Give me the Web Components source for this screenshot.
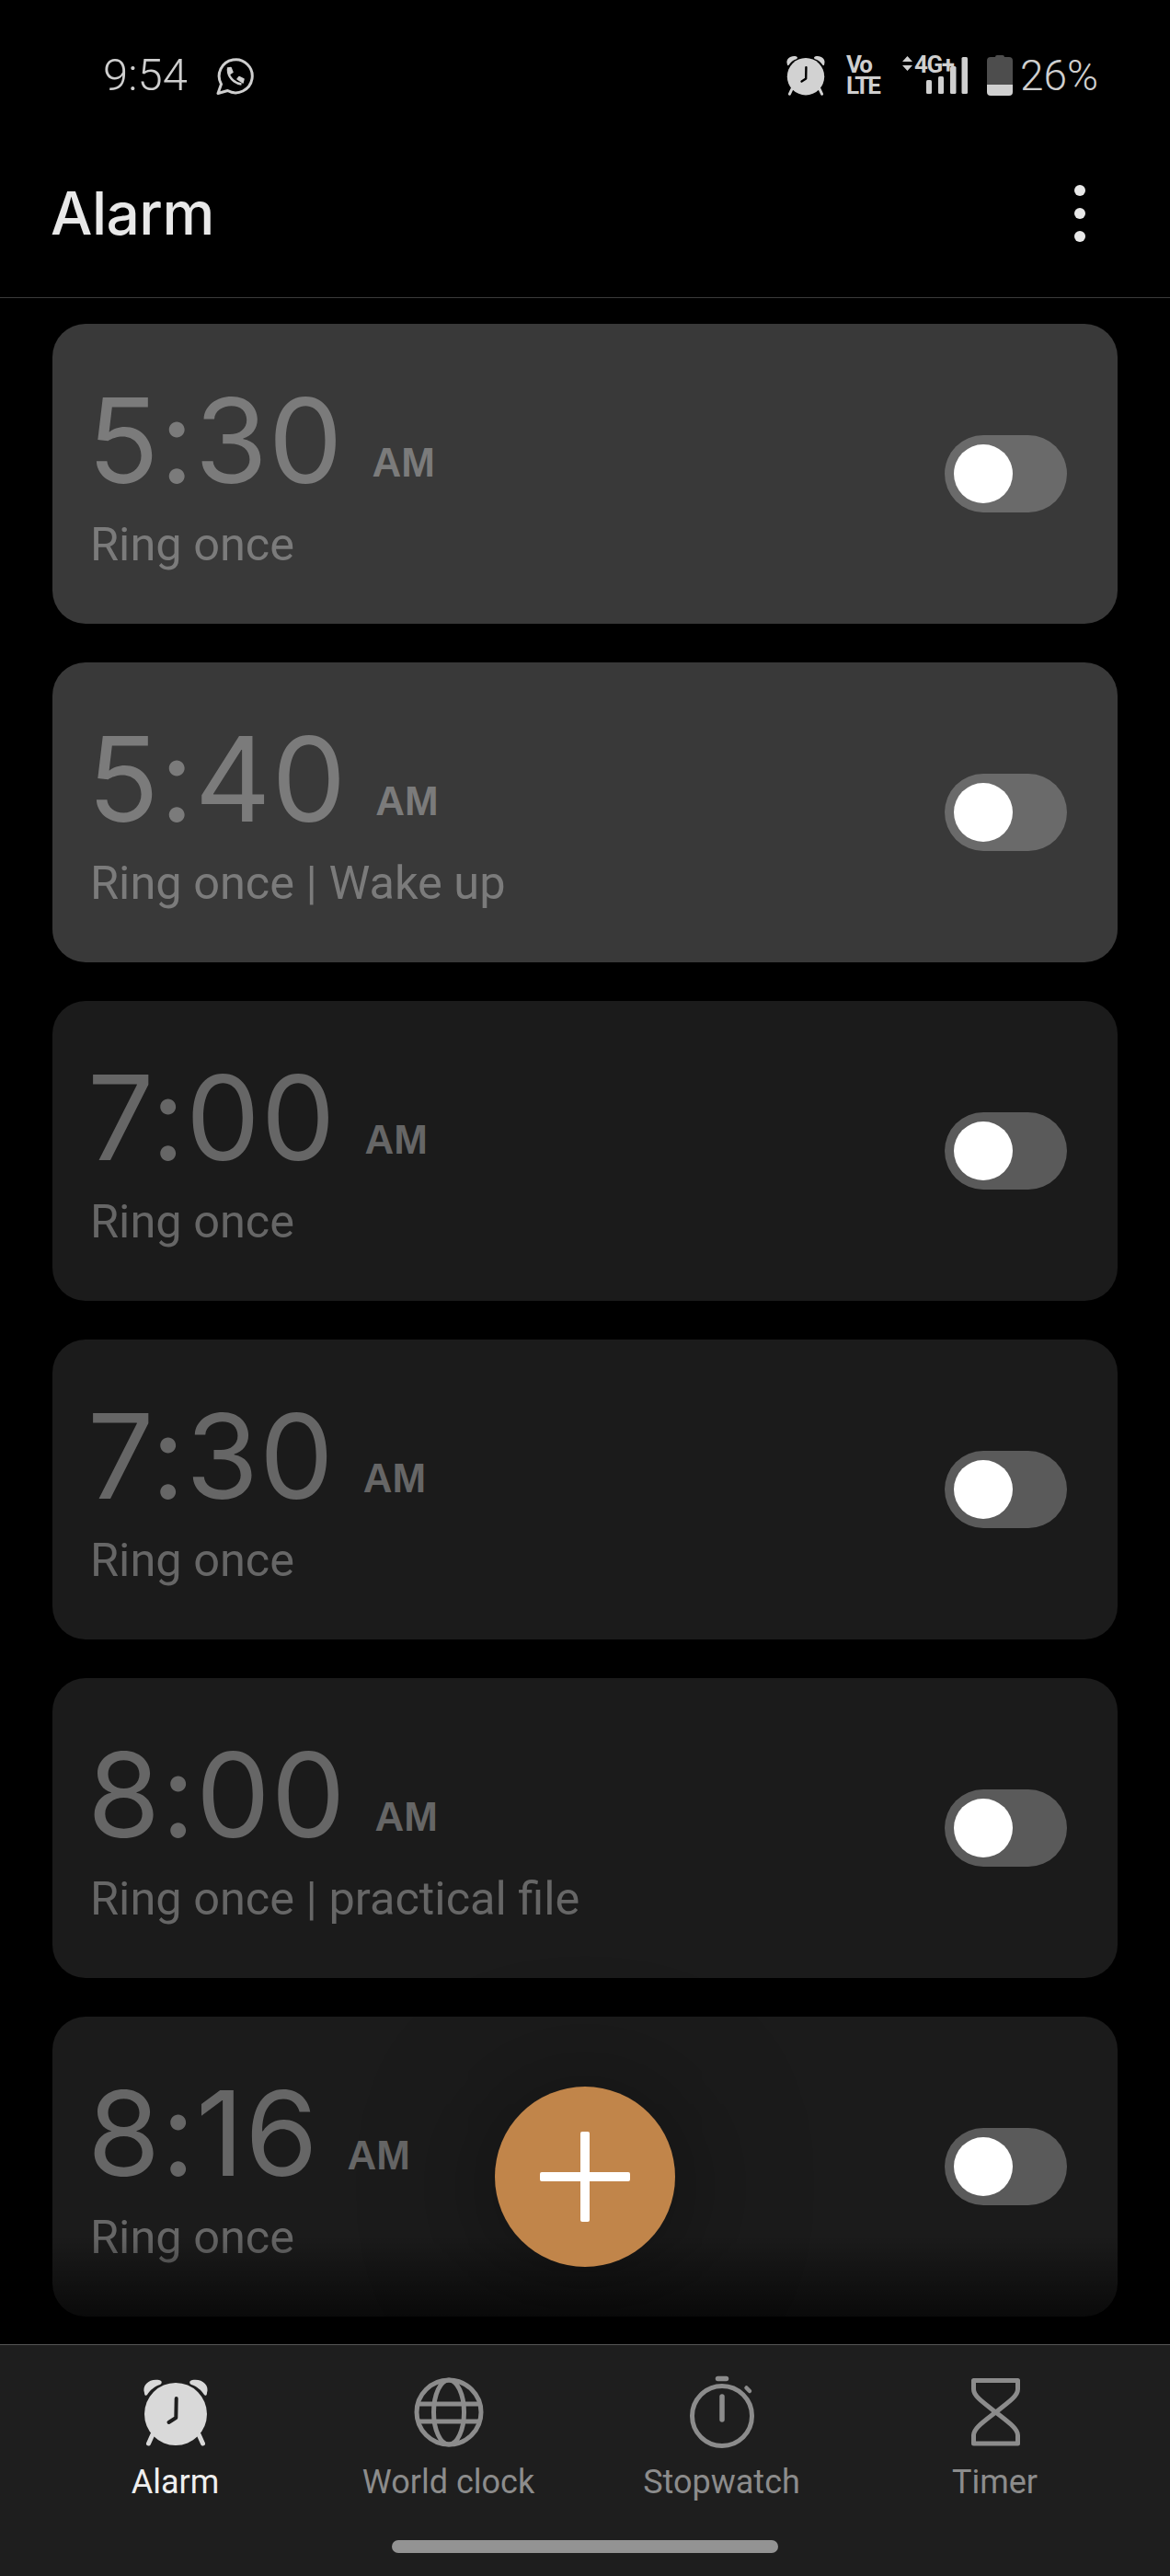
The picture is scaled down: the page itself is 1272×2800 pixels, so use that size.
<!DOCTYPE html>
<html lang="en">
<head>
<meta charset="utf-8">
<title>Alarm</title>
<style>
    html, body { margin: 0; background: #000; }
</style>
</head>
<body>
<alarm-app>
    <status-bar></status-bar>
    <app-header>Alarm</app-header>
    <alarm-list>
        <alarm-card bright><span slot="time">5:30</span><span slot="period">AM</span>Ring once</alarm-card>
        <alarm-card bright><span slot="time">5:40</span><span slot="period">AM</span>Ring once | Wake up</alarm-card>
        <alarm-card><span slot="time">7:00</span><span slot="period">AM</span>Ring once</alarm-card>
        <alarm-card><span slot="time">7:30</span><span slot="period">AM</span>Ring once</alarm-card>
        <alarm-card><span slot="time">8:00</span><span slot="period">AM</span>Ring once | practical file</alarm-card>
        <alarm-card><span slot="time">8:16</span><span slot="period">AM</span>Ring once</alarm-card>
    </alarm-list>
    <fab-button></fab-button>
    <tab-bar>
        <tab-item icon="alarm" active>Alarm</tab-item>
        <tab-item icon="globe">World clock</tab-item>
        <tab-item icon="stopwatch">Stopwatch</tab-item>
        <tab-item icon="timer">Timer</tab-item>
    </tab-bar>
</alarm-app>

<script>
const alarmGlyph = ( handColor ) => `
    <circle cx="42" cy="44" r="34" fill="currentColor"/>
    <path d="M8 21C5 12 14 5 24 7C28 8 27 11 25 12C19 14 14 18 11 23C10 24.500 8 24 8 21Z" fill="currentColor"/>
    <path d="M76 21C79 12 70 5 60 7C56 8 57 11 59 12C65 14 70 18 73 23C74 24.500 76 24 76 21Z" fill="currentColor"/>
    <path d="M17 66L12.500 76M67 66L71.500 76" stroke="currentColor" stroke-width="5" stroke-linecap="round" fill="none"/>
    <path d="M42.700 27L42.300 48L34.500 53" stroke="${handColor}" stroke-width="4" stroke-linecap="round" stroke-linejoin="round" fill="none"/>
`;

const tabIcons = {
    alarm: alarmGlyph("#1e1e1e"),
    globe: `
        <g fill="none" stroke="currentColor" stroke-width="5">
            <circle cx="42" cy="42" r="35"/>
            <ellipse cx="42" cy="42" rx="16.500" ry="35"/>
            <path d="M10 33H74M10 52H74"/>
        </g>`,
    stopwatch: `
        <g fill="none" stroke="currentColor" stroke-linecap="round">
            <circle cx="42" cy="46" r="32.500" stroke-width="5"/>
            <path d="M37.500 5.500H46.500" stroke-width="5.500"/>
            <path d="M68.500 15.500L72 19" stroke-width="4.500"/>
            <path d="M42 25V50" stroke-width="5.500"/>
        </g>`,
    timer: `
        <path d="M18.500 7.500H66.500V17C66.500 24 58 30 42.500 42C27 54 18.500 60 18.500 67V76H66.500V67C66.500 60 58 54 42.500 42C27 30 18.500 24 18.500 17Z"
              fill="none" stroke="currentColor" stroke-width="5" stroke-linejoin="round"/>`
};

class AlarmApp extends HTMLElement {
    constructor() {
        super();
        const shadowRoot = this.attachShadow({ mode: 'open' });
        shadowRoot.innerHTML = `
            <style>
                :host {
                    display: flex;
                    flex-direction: column;
                    position: relative;
                    width: 1272px;
                    height: 2800px;
                    overflow: hidden;
                    background: #000;
                    font-family: Inter, "Liberation Sans", sans-serif;
                }
            </style>
            <slot></slot>
        `;
    }
}

class StatusBar extends HTMLElement {
    constructor() {
        super();
        const shadowRoot = this.attachShadow({ mode: 'open' });
        shadowRoot.innerHTML = `
            <style>
                :host {
                    display: flex;
                    align-items: center;
                    height: 164px;
                    flex: none;
                    box-sizing: border-box;
                    padding: 0 78px 0 112px;
                    color: #cfcfcf;
                    font-family: Roboto, sans-serif;
                }
                .clock {
                    font-size: 49px;
                    font-weight: 300;
                    line-height: 60px;
                }
                .whatsapp {
                    margin-left: 30px;
                    margin-top: 1px;
                }
                .right {
                    display: flex;
                    align-items: center;
                    margin-left: auto;
                }
                .volte {
                    display: flex;
                    flex-direction: column;
                    width: 38px;
                    margin-left: 22px;
                    font-size: 26px;
                    font-weight: 700;
                    line-height: 23px;
                    letter-spacing: -2px;
                }
                .network {
                    display: grid;
                    width: 72px;
                    height: 44px;
                    margin-left: 22px;
                }
                .network > * {
                    grid-area: 1 / 1;
                }
                .network span {
                    margin-left: 14px;
                    font-size: 26px;
                    font-weight: 700;
                    line-height: 20px;
                    letter-spacing: -1.4px;
                    white-space: nowrap;
                }
                .battery {
                    margin-left: 21px;
                }
                .percent {
                    margin-left: 8px;
                    font-size: 46px;
                    font-weight: 300;
                    line-height: 60px;
                }
            </style>
            <span class="clock">9:54</span>
            <svg class="whatsapp" width="42" height="42" viewBox="0 0 42 42">
                <path d="M3 39.500L6.500 29.500A18 18 0 1 1 13.500 36.500Z" fill="none" stroke="currentColor" stroke-width="3" stroke-linejoin="round"/>
                <path d="M14 13C13.500 21 20 28.500 28.500 29.500" fill="none" stroke="currentColor" stroke-width="2.500"/>
                <path d="M13.500 12L17 11.500L19 16.500L16 18.500Z M24 24L26 21.500L31 24L30 28Z" fill="currentColor" stroke="currentColor" stroke-width="1.500" stroke-linejoin="round"/>
            </svg>
            <div class="right">
                <svg width="44" height="44" viewBox="6 5 72 74" style="color:#d2d2d2">${alarmGlyph("#000")}</svg>
                <div class="volte"><span>Vo</span><span>LTE</span></div>
                <div class="network">
                    <svg width="72" height="44" viewBox="0 0 72 44">
                        <path d="M6.500 1L12 7H1ZM6.500 17L12 11H1Z" fill="currentColor"/>
                        <rect x="27" y="27" width="6" height="15" rx="1.500" fill="currentColor"/>
                        <rect x="40" y="23" width="6" height="19" rx="1.500" fill="currentColor"/>
                        <rect x="53" y="12" width="6.500" height="30" rx="1.500" fill="currentColor"/>
                        <rect x="65.500" y="2" width="6.500" height="40" rx="1.500" fill="currentColor"/>
                    </svg>
                    <span>4G+</span>
                </div>
                <svg class="battery" width="28" height="44" viewBox="0 0 28 44">
                    <path d="M9 2Q9 0 11 0H17Q19 0 19 2H24Q28 2 28 6V32H0V6Q0 2 4 2Z" fill="#4d4d4d"/>
                    <path d="M0 32H28V40Q28 44 24 44H4Q0 44 0 40Z" fill="#cfcfcf"/>
                </svg>
                <span class="percent">26%</span>
            </div>
        `;
    }
}

class AppHeader extends HTMLElement {
    constructor() {
        super();
        const shadowRoot = this.attachShadow({ mode: 'open' });
        shadowRoot.innerHTML = `
            <style>
                :host {
                    display: flex;
                    align-items: center;
                    justify-content: space-between;
                    flex: none;
                    height: 160px;
                    box-sizing: border-box;
                    padding: 0 92px 24px 55px;
                    border-bottom: 1px solid #3a3a3a;
                    color: #e8e8e8;
                    font-size: 64px;
                    font-weight: 500;
                    letter-spacing: -0.5px;
                }
                .more {
                    display: flex;
                    flex-direction: column;
                    gap: 13px;
                }
                .more i {
                    width: 12px;
                    height: 12px;
                    border-radius: 50%;
                    background: #e8e8e8;
                }
            </style>
            <slot></slot>
            <div class="more"><i></i><i></i><i></i></div>
        `;
    }
}

class AlarmList extends HTMLElement {
    constructor() {
        super();
        const shadowRoot = this.attachShadow({ mode: 'open' });
        shadowRoot.innerHTML = `
            <style>
                :host {
                    display: flex;
                    flex-direction: column;
                    flex: 1;
                    min-height: 0;
                    position: relative;
                    gap: 42px;
                    padding: 28px 57px 0;
                }
                :host::after {
                    content: "";
                    position: absolute;
                    left: 0;
                    right: 0;
                    bottom: 0;
                    height: 118px;
                    background: linear-gradient(rgba(0, 0, 0, 0), rgba(0, 0, 0, .85));
                }
            </style>
            <slot></slot>
        `;
    }
}

class AlarmCard extends HTMLElement {
    constructor() {
        super();
        const shadowRoot = this.attachShadow({ mode: 'open' });
        shadowRoot.innerHTML = `
            <style>
                :host {
                    display: flex;
                    align-items: center;
                    justify-content: space-between;
                    flex: none;
                    height: 326px;
                    box-sizing: border-box;
                    padding: 0 55px 0 41px;
                    border-radius: 36px;
                    background: var(--card-bg, #1b1b1b);
                    color: var(--card-fg, #666);
                }
                :host([bright]) {
                    --card-bg: #393939;
                    --card-fg: #7b7b7b;
                    --track-bg: #6a6a6a;
                }
                .text {
                    align-self: flex-start;
                    padding-top: 62px;
                }
                .when {
                    height: 130px;
                    margin-left: -3px;
                    line-height: 130px;
                    white-space: nowrap;
                }
                ::slotted([slot="time"]) {
                    font-size: 128px;
                    font-weight: 400;
                    letter-spacing: 1px;
                }
                ::slotted([slot="period"]) {
                    margin-left: 31px;
                    font-family: "Liberation Sans", sans-serif;
                    font-size: 44px;
                    font-weight: 700;
                    vertical-align: 7px;
                }
                .label {
                    margin-top: 18px;
                    font-family: Roboto, sans-serif;
                    font-size: 50.5px;
                    font-weight: 400;
                    line-height: 60px;
                }
            </style>
            <div class="text">
                <div class="when"><slot name="time"></slot><slot name="period"></slot></div>
                <div class="label"><slot></slot></div>
            </div>
            <alarm-switch></alarm-switch>
        `;
    }
}

class AlarmSwitch extends HTMLElement {
    constructor() {
        super();
        const shadowRoot = this.attachShadow({ mode: 'open' });
        shadowRoot.innerHTML = `
            <style>
                :host {
                    display: flex;
                    align-items: center;
                    flex: none;
                    width: 133px;
                    height: 84px;
                    box-sizing: border-box;
                    padding: 0 10px;
                    border-radius: 42px;
                    background: var(--track-bg, #5a5a5a);
                }
                i {
                    width: 64px;
                    height: 64px;
                    border-radius: 50%;
                    background: #fff;
                }
            </style>
            <i></i>
        `;
    }
}

class FabButton extends HTMLElement {
    constructor() {
        super();
        const shadowRoot = this.attachShadow({ mode: 'open' });
        shadowRoot.innerHTML = `
            <style>
                :host {
                    display: flex;
                    align-items: center;
                    justify-content: center;
                    position: absolute;
                    left: 538px;
                    bottom: 336px;
                    width: 196px;
                    height: 196px;
                    border-radius: 50%;
                    background: #c1854a;
                    box-shadow: 0 10px 150px rgba(0, 0, 0, .45);
                }
            </style>
            <svg width="100" height="100" viewBox="0 0 100 100" fill="#fff">
                <rect x="1" y="45" width="98" height="10" rx="2"/>
                <rect x="45" y="1" width="10" height="98" rx="2"/>
            </svg>
        `;
    }
}

class TabBar extends HTMLElement {
    constructor() {
        super();
        const shadowRoot = this.attachShadow({ mode: 'open' });
        shadowRoot.innerHTML = `
            <style>
                :host {
                    display: flex;
                    flex-direction: column;
                    align-items: center;
                    flex: none;
                    position: relative;
                    height: 252px;
                    box-sizing: border-box;
                    padding-top: 31px;
                    border-top: 1px solid #555;
                    background: #1e1e1e;
                }
                .tabs {
                    display: grid;
                    grid-template-columns: repeat(4, 297px);
                }
                .home {
                    width: 420px;
                    height: 14px;
                    margin-top: 41px;
                    border-radius: 7px;
                    background: #939393;
                }
            </style>
            <div class="tabs"><slot></slot></div>
            <div class="home"></div>
        `;
    }
}

class TabItem extends HTMLElement {
    connectedCallback() {
        if( this.shadowRoot ) return;
        const shadowRoot = this.attachShadow({ mode: 'open' });
        shadowRoot.innerHTML = `
            <style>
                :host {
                    display: flex;
                    flex-direction: column;
                    align-items: center;
                    gap: 12px;
                    color: #8c8c8c;
                    font-family: Roboto, sans-serif;
                    font-size: 36px;
                    line-height: 44px;
                }
                :host([active]) {
                    color: #efefef;
                }
                :host([active]) svg {
                    color: #d9d9d9;
                }
            </style>
            <svg width="84" height="84" viewBox="0 0 84 84">${tabIcons[this.getAttribute("icon")]}</svg>
            <span><slot></slot></span>
        `;
    }
}

customElements.define("alarm-app", AlarmApp);
customElements.define("status-bar", StatusBar);
customElements.define("app-header", AppHeader);
customElements.define("alarm-list", AlarmList);
customElements.define("alarm-card", AlarmCard);
customElements.define("alarm-switch", AlarmSwitch);
customElements.define("fab-button", FabButton);
customElements.define("tab-bar", TabBar);
customElements.define("tab-item", TabItem);
</script>
</body>
</html>
